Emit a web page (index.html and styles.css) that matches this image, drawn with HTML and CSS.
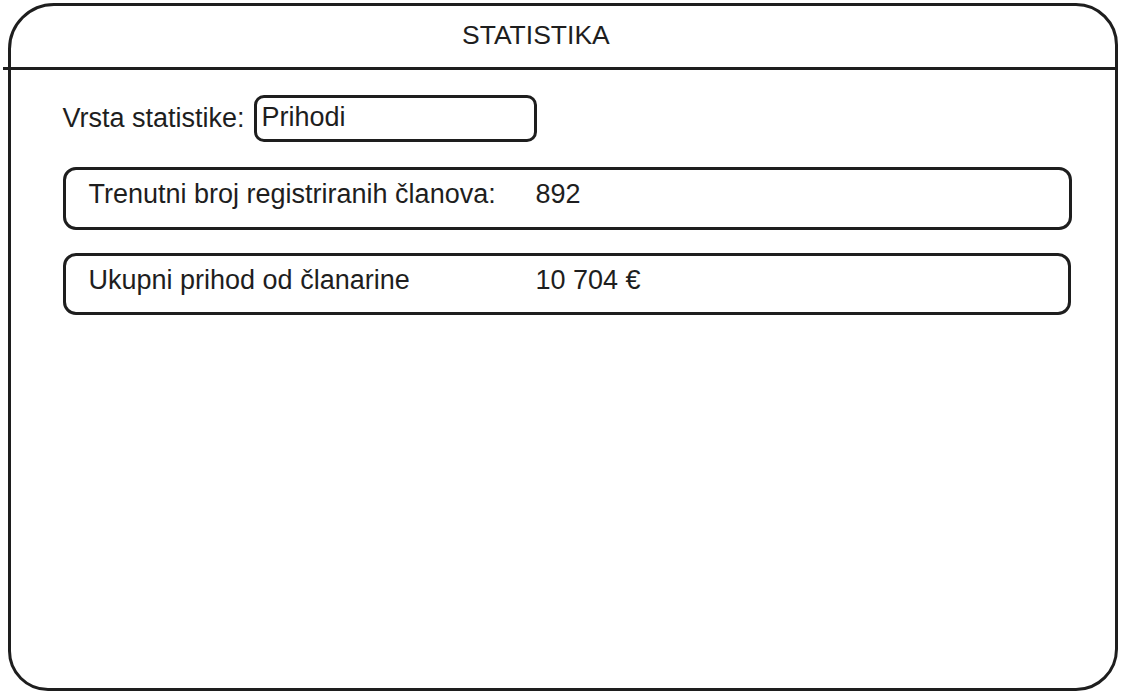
FILE: index.html
```html
<!DOCTYPE html>
<html lang="hr">
<head>
<meta charset="utf-8">
<title>Statistika</title>
<link rel="stylesheet" href="styles.css">
</head>
<body>
<div class="frame">
  <div class="header"><span class="title">STATISTIKA</span></div>
  <div class="content">
    <div class="type-row">
      <span class="label">Vrsta statistike:</span>
      <div class="select">Prihodi</div>
    </div>
    <div class="stat">
      <span class="stat-label">Trenutni broj registriranih članova:</span>
      <span class="stat-value">892</span>
    </div>
    <div class="stat stat-second">
      <span class="stat-label">Ukupni prihod od članarine</span>
      <span class="stat-value">10 704 €</span>
    </div>
  </div>
</div>
</body>
</html>
```

FILE: styles.css
```css
* { box-sizing: border-box; }

html, body {
  margin: 0;
  padding: 0;
  background: #ffffff;
}

body {
  font-family: "Liberation Sans", Arial, Helvetica, sans-serif;
  color: #1e1e1e;
  font-size: 27px;
}

.frame {
  margin: 3px 0 0 8px;
  width: 1110px;
  height: 688px;
  border: 3px solid #1e1e1e;
  border-radius: 46px 42px 42px 40px;
}

.header {
  height: 64px;
  margin-left: -8px;
  border-bottom: 3px solid #1e1e1e;
  display: flex;
  align-items: center;
  padding-left: 459px;
  padding-bottom: 2px;
}

.title {
  font-size: 26.5px;
  line-height: 1;
}

.content {
  padding: 25px 0 0 51.5px;
  display: flex;
  flex-direction: column;
  align-items: flex-start;
}

.type-row {
  display: flex;
  align-items: center;
  gap: 9px;
}

.label {
  line-height: 1;
}

.select {
  width: 283px;
  height: 47px;
  border: 3px solid #1e1e1e;
  border-radius: 10px;
  padding: 0 0 3px 5px;
  display: flex;
  align-items: center;
  line-height: 1;
}

.stat {
  margin-top: 25px;
  width: 1009px;
  height: 63px;
  border: 3px solid #1e1e1e;
  border-radius: 13px;
  display: grid;
  grid-template-columns: 447px 1fr;
  align-items: center;
  padding: 0 0 8px 23px;
  line-height: 1;
}

.stat-second {
  margin-top: 23px;
  width: 1008px;
  height: 62px;
  padding-bottom: 8px;
}
```
